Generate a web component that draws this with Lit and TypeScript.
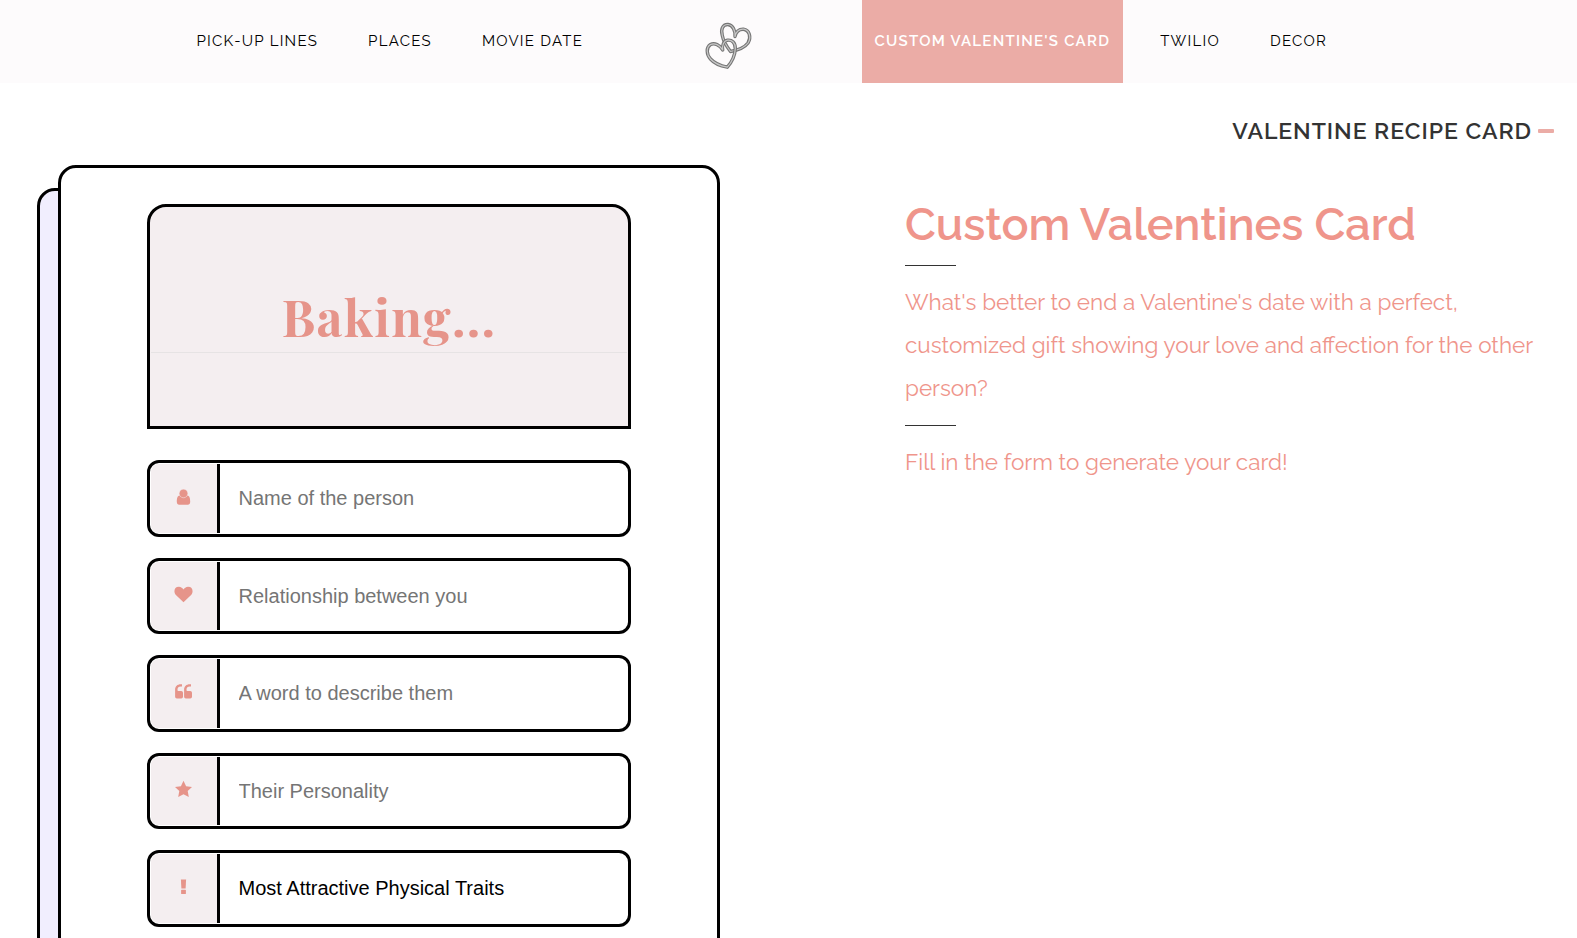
import { LitElement, html, css, svg } from 'lit'
import { classMap } from 'lit/directives/class-map.js'

interface NavItem {
  label: string
  active?: boolean
}

const LEFT_NAV: NavItem[] = [
  { label: 'Pick-up Lines' },
  { label: 'Places' },
  { label: 'Movie Date' },
]

const RIGHT_NAV: NavItem[] = [
  { label: "Custom Valentine's Card", active: true },
  { label: 'Twilio' },
  { label: 'Decor' },
]

const ICONS = {
  user: svg`
    <path d="M5.6 8.4C7.8 11.2 11.2 11.2 13.4 8.4C15.8 8.6 16.2 11.8 16.2 14.8C16.2 16.6 15.2 17.8 13.8 17.8H5.2C3.8 17.8 2.8 16.6 2.8 14.8C2.8 11.8 3.2 8.6 5.6 8.4Z"/>
    <circle cx="9.5" cy="6.5" r="4.3"/>`,
  heart: svg`<path d="M9.5 17.2L1.9 10C-.6 7.4 -.1 1.8 4.9 1.8C7 1.8 8.7 3.4 9.5 4.4C10.3 3.4 12 1.8 14.1 1.8C19.1 1.8 19.6 7.4 17.1 10Z"/>`,
  quote: svg`
    <path d="M9 10.8V14.8Q9 16.6 7.2 16.6H2.9Q1.1 16.6 1.1 14.8V7.6C1.1 4.4 3.4 2.2 6.7 2.2H8V4.6H6.7C4.8 4.6 3.5 5.9 3.5 7.6V8.2Q3.5 9 4.4 9H7.2Q9 9 9 10.8Z"/>
    <path d="M18 10.8V14.8Q18 16.6 16.2 16.6H11.9Q10.1 16.6 10.1 14.8V7.6C10.1 4.4 12.4 2.2 15.7 2.2H17V4.6H15.7C13.8 4.6 12.5 5.9 12.5 7.6V8.2Q12.5 9 13.4 9H16.2Q18 9 18 10.8Z"/>`,
  star: svg`<path d="M9.5 .8L12.1 6.2L18 7L13.7 11.1L14.8 17L9.5 14.2L4.2 17L5.3 11.1L1 7L6.9 6.2Z"/>`,
  exclamation: svg`
    <path d="M6.9 2.4H12.1L11.6 11.6H7.4Z"/>
    <rect x="7.1" y="12.8" width="4.8" height="4.2" rx=".6"/>`,
}

interface Field {
  icon: keyof typeof ICONS
  label: string
  filled?: boolean
}

const FIELDS: Field[] = [
  { icon: 'user', label: 'Name of the person' },
  { icon: 'heart', label: 'Relationship between you' },
  { icon: 'quote', label: 'A word to describe them' },
  { icon: 'star', label: 'Their Personality' },
  { icon: 'exclamation', label: 'Most Attractive Physical Traits', filled: true },
]

export class SiteNav extends LitElement {
  static styles = css`
    :host { display: block; }
    nav {
      display: flex;
      height: 83px;
      background: #fdfbfc;
      font: 400 15px/82px Raleway, Lato, sans-serif;
      letter-spacing: 1.25px;
      text-transform: uppercase;
      color: #000;
    }
    .group { display: flex; gap: 25px; }
    .left { width: 700px; box-sizing: border-box; padding-left: 184px; }
    .right { padding-left: 102px; }
    .link { padding: 0 12.5px; white-space: nowrap; }
    .active {
      background: #ebaca6;
      color: #fff;
      font-weight: 600;
    }
    .logo { width: 60px; height: 56px; margin-top: 19px; flex: none; }
    .outer { fill: none; stroke: #777; stroke-width: 3.4; stroke-linejoin: round; }
    .inner { fill: none; stroke: #c8c8c8; stroke-width: 1.2; stroke-linejoin: round; }
  `

  renderGroup(items: NavItem[], side: string) {
    return html`
      <div class="group ${side}">
        ${items.map(item => html`
          <a class=${classMap({ link: true, active: !!item.active })}>${item.label}</a>
        `)}
      </div>
    `
  }

  render() {
    const back = 'M35 17.5C35.5 12 33 6 28 5.5C22.5 5.2 20.5 11 22.3 16.5C23.5 23 27 28 30.5 32.5C36 31.5 44 29.5 48 24C51.5 18.5 49.5 11 43.5 10.2C39 10 36 13 35 17.5Z'
    const front = 'M22.7 31C20 26 14.5 23.5 10.5 25.5C5.8 28.5 6.5 35.5 10.5 40C14.5 44.5 21 47 27.3 48.2C31 44 35 37 35.3 29.5C35.5 24 32 20.5 27.5 21.2C23.5 22 22 26.5 22.7 31Z'
    return html`
      <nav>
        ${this.renderGroup(LEFT_NAV, 'left')}
        <svg class="logo" viewBox="0 0 60 56">
          <path class="outer" d=${back} /><path class="inner" d=${back} />
          <path class="outer" d=${front} /><path class="inner" d=${front} />
        </svg>
        ${this.renderGroup(RIGHT_NAV, 'right')}
      </nav>
    `
  }
}

customElements.define('site-nav', SiteNav)

export class RecipeForm extends LitElement {
  static styles = css`
    :host { display: block; }
    .stack { position: relative; }
    .back, .front {
      box-sizing: border-box;
      height: 1100px;
      border: 3px solid #000;
      border-radius: 18px;
    }
    .back {
      position: absolute;
      top: 23px;
      left: -21px;
      width: 100%;
      background: #f1eefe;
    }
    .front {
      position: relative;
      padding: 36px 86px;
      background: #fff;
    }
    .preview {
      box-sizing: border-box;
      height: 225px;
      padding: 0 1px;
      border: 3px solid #000;
      border-radius: 19px 19px 0 0;
      background: #f4eef0;
    }
    .preview h2 {
      box-sizing: border-box;
      height: 146px;
      margin: 0;
      padding-top: 79px;
      border-bottom: 1px solid #e6e3e4;
      font: bold 50px/62px 'Playfair Display', 'Liberation Serif', serif;
      letter-spacing: 1.3px;
      text-align: center;
      color: #e6948a;
    }
    .fields {
      display: flex;
      flex-direction: column;
      gap: 21px;
      padding-top: 31px;
    }
    .field {
      display: flex;
      box-sizing: border-box;
      height: 76.5px;
      padding: 1px;
      border: 3px solid #000;
      border-radius: 12px;
    }
    .icon {
      display: flex;
      align-items: center;
      justify-content: center;
      width: 66px;
      padding-bottom: 2px;
      border-right: 3px solid #000;
      border-radius: 8px 0 0 8px;
      background: #f4eef0;
    }
    .icon svg { width: 20px; height: 20px; fill: #e6948a; }
    .icon circle { stroke: #f4eef0; stroke-width: 0.4; }
    input {
      flex: 1;
      min-width: 0;
      padding: 0.6px 18px 0 18.5px;
      border: 0;
      outline: 0;
      background: transparent;
      font: 20px 'Liberation Sans', Arial, sans-serif;
      color: #000;
    }
    input::placeholder { color: #757575; }
  `

  render() {
    return html`
      <div class="stack">
        <div class="back"></div>
        <div class="front">
          <div class="preview"><h2>Baking...</h2></div>
          <div class="fields">
            ${FIELDS.map(f => html`
              <label class="field">
                <span class="icon"><svg viewBox="0 0 20 20">${ICONS[f.icon]}</svg></span>
                <input placeholder=${f.label} .value=${f.filled ? f.label : ''} />
              </label>
            `)}
          </div>
        </div>
      </div>
    `
  }
}

customElements.define('recipe-form', RecipeForm)

export class AppRoot extends LitElement {
  static styles = css`
    :host {
      display: block;
      height: 938px;
      overflow: hidden;
      background: #fff;
      font-family: Raleway, Lato, sans-serif;
    }
    .section-title {
      display: flex;
      align-items: center;
      justify-content: flex-end;
      box-sizing: border-box;
      height: 82px;
      padding: 14px 23px 0 0;
    }
    .section-title h3 {
      margin: 0;
      font-size: 23px;
      line-height: 28px;
      font-weight: 600;
      letter-spacing: 0.96px;
      text-transform: uppercase;
      color: #333;
    }
    .dash { width: 16px; height: 4px; margin: 0 0 1px 6px; border-radius: 1px; background: #ebaca6; }
    .page { display: flex; }
    recipe-form { width: 662px; margin-left: 58px; flex: none; }
    .intro { margin-left: 185px; padding-top: 30px; color: #ef958b; }
    .intro h1 {
      margin: 0;
      font-size: 45px;
      line-height: 60px;
      font-weight: 600;
    }
    .rule { width: 51px; height: 1px; background: #333; }
    .intro h1 + .rule { margin-top: 10px; }
    .intro p {
      width: 640px;
      margin: 15px 0;
      font-size: 22.5px;
      line-height: 43px;
    }
  `

  render() {
    return html`
      <site-nav></site-nav>
      <header class="section-title">
        <h3>Valentine Recipe Card</h3>
        <span class="dash"></span>
      </header>
      <main class="page">
        <recipe-form></recipe-form>
        <section class="intro">
          <h1>Custom Valentines Card</h1>
          <div class="rule"></div>
          <p>
            What's better to end a Valentine's date with a perfect,
            customized gift showing your love and affection for the other
            person?
          </p>
          <div class="rule"></div>
          <p>Fill in the form to generate your card!</p>
        </section>
      </main>
    `
  }
}

customElements.define('app-root', AppRoot)

declare global {
  interface HTMLElementTagNameMap {
    'app-root': AppRoot
    'site-nav': SiteNav
    'recipe-form': RecipeForm
  }
}
